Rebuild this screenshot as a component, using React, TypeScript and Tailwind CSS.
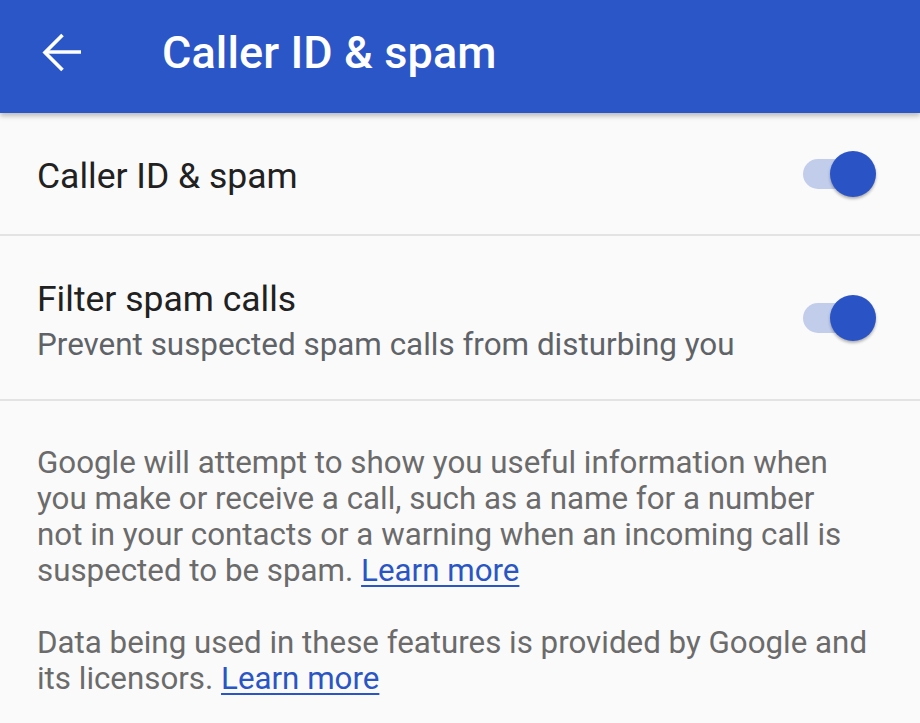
import React, { useState } from 'react'

const Toggle = ({ on, onChange }: { on: boolean; onChange: () => void }) => (
	<button onClick={onChange} className="relative w-[76px] h-[48px] shrink-0">
		<span
			className={`absolute left-[2px] top-[9px] w-[62px] h-[30px] rounded-full ${on ? 'bg-[#c2cdeb]' : 'bg-[#b9b9b9]'}`}
		/>
		<span
			className={`absolute top-[1px] w-[46px] h-[46px] rounded-full shadow-[0_2px_3px_rgba(0,0,0,0.3)] ${
				on ? 'left-[29px] bg-[#2a53c5]' : 'left-0 bg-[#f1f1f1]'
			}`}
		/>
	</button>
)

export default function App() {
	const [callerId, setCallerId] = useState(true)
	const [filterSpam, setFilterSpam] = useState(true)

	return (
		<div className="w-[920px] h-[723px] overflow-hidden bg-[#fafafa] font-['Roboto',sans-serif]">
			{/* App bar */}
			<div className="relative h-[113px] bg-[#2b56c7] flex items-center shadow-[0_3px_5px_rgba(0,0,0,0.25)]">
				<svg className="ml-[42px] w-[40px] h-[40px] -mt-[9px]" viewBox="0 0 40 40" fill="none" stroke="white" strokeWidth="3.6">
					<path d="M3 20H39" />
					<path d="M20.5 3L3 20.5L20.5 38" strokeLinejoin="miter" />
				</svg>
				<h1 className="ml-[80px] text-white text-[45px] font-medium leading-none tracking-[0.1px] -mt-[9px]">
					Caller ID &amp; spam
				</h1>
			</div>

			{/* Caller ID row */}
			<div className="flex items-center justify-between h-[123px] pl-[37px] pr-[43px] border-b-2 border-[#e3e3e3]">
				<span className="text-[35.5px] text-[#212121] leading-none mt-[6px]">Caller ID &amp; spam</span>
				<Toggle on={callerId} onChange={() => setCallerId(!callerId)} />
			</div>

			{/* Filter spam row */}
			<div className="flex items-center justify-between h-[165px] pl-[37px] pr-[43px] border-b-2 border-[#e3e3e3]">
				<div className="flex flex-col mt-[9px]">
					<span className="text-[35.5px] text-[#212121] leading-[46px]">Filter spam calls</span>
					<span className="text-[31.4px] text-[#5f6368] leading-[46px]">
						Prevent suspected spam calls from disturbing you
					</span>
				</div>
				<Toggle on={filterSpam} onChange={() => setFilterSpam(!filterSpam)} />
			</div>

			{/* Info text */}
			<div className="pl-[37px] pr-[30px] pt-[44px] text-[31.3px] leading-[36px] text-[#6b6b6b]">
				<p className="pr-[45px]">
					Google will attempt to show you useful information when you make or receive a call, such as a name for a
					number not in your contacts or a warning when an incoming call is suspected to be spam.{' '}
					<a href="#" className="text-[#2a55c5] underline decoration-2 underline-offset-[4px]">Learn more</a>
				</p>
				<p className="mt-[36px]">
					Data being used in these features is provided by Google and its licensors.{' '}
					<a href="#" className="text-[#2a55c5] underline decoration-2 underline-offset-[4px]">Learn more</a>
				</p>
			</div>
		</div>
	)
}
